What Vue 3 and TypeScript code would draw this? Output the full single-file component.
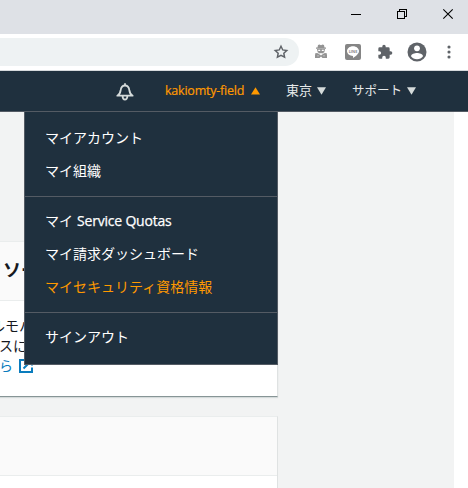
<script setup lang="ts">
interface MenuItem {
  prefix: string
  latin?: string
  active?: boolean
}

const menuGroups: MenuItem[][] = [
  [{ prefix: 'マイアカウント' }, { prefix: 'マイ組織' }],
  [
    { prefix: 'マイ', latin: 'Service Quotas' },
    { prefix: 'マイ請求ダッシュボード' },
    { prefix: 'マイセキュリティ資格情報', active: true },
  ],
  [{ prefix: 'サインアウト' }],
]
</script>

<template>
  <div class="window">
    <header class="titlebar">
      <svg class="win-btn" viewBox="0 0 46 28" shape-rendering="crispEdges">
        <path d="M18 14.5h10" stroke="#000" fill="none" />
      </svg>
      <svg class="win-btn" viewBox="0 0 46 28" shape-rendering="crispEdges">
        <path d="M18.5 11.5h7v7h-7zM20.5 11v-1.500h7v7h-1.500" stroke="#000" fill="none" />
      </svg>
      <svg class="win-btn" viewBox="0 0 46 28">
        <path d="M18.300 9.300l9.400 9.400M27.700 9.300l-9.400 9.400" stroke="#000" stroke-width="1.100" fill="none" />
      </svg>
    </header>

    <div class="toolbar">
      <div class="omnibox">
        <svg class="star" viewBox="0 0 16 16">
          <path d="M8 2.300l1.750 3.650 4.050.5-3 2.800.8 4L8 11.300l-3.600 1.950.8-4-3-2.800 4.050-.5z" fill="none" stroke="#5f6368" stroke-width="1.450" />
        </svg>
      </div>
      <svg class="ext incognito" viewBox="0 0 14 16">
        <g fill="#939393">
          <path d="M4 1l1.500-.5L7 1.200 8.500.5 10 1l.5 2.500h1.500v1.200H2V3.500h1.500z" />
          <path d="M3 5h8l-.7 3.300L7 10.300 3.700 8.300z" />
          <path d="M1.500 9l2.500.3L7 11.400l3-2.100 2.500-.3.500 2v3H8.500L7 12.400 5.500 14H1v-3z" />
        </g>
        <path d="M4.200 5.800h2v1.300h-2zM7.800 5.800h2v1.300h-2zM6 9h2v.7H6zM3.500 11.500h1v.8h-1zM9.500 11.500h1v.8h-1z" fill="#fff" />
      </svg>
      <svg class="ext line" viewBox="0 0 16 16">
        <rect width="16" height="16" rx="2" fill="#858585" />
        <path d="M8 2.200c3.400 0 6 2.200 6 4.900 0 2.500-3 5.200-6 7v-2.200c-3.400 0-6-2.200-6-4.800s2.600-4.900 6-4.900z" fill="#fff" />
        <text x="8" y="8.500" text-anchor="middle" font-size="3.800" font-weight="700" fill="#858585">LINE</text>
      </svg>
      <svg class="ext puzzle" viewBox="0 0 24 24">
        <path d="M20.500 11H19V7a2 2 0 0 0-2-2h-4V3.500a2.500 2.500 0 0 0-5 0V5H4a2 2 0 0 0-2 2v3.800h1.500a2.700 2.700 0 0 1 0 5.400H2V20a2 2 0 0 0 2 2h3.800v-1.500a2.700 2.700 0 0 1 5.400 0V22H17a2 2 0 0 0 2-2v-4h1.500a2.500 2.500 0 0 0 0-5z" fill="#5f6368" />
      </svg>
      <svg class="avatar" viewBox="0 0 20 20">
        <circle cx="10" cy="10" r="9.500" fill="#5f6368" />
        <circle cx="10" cy="6.300" r="2.900" fill="#fff" />
        <path d="M4 14.200c0-2.100 3.800-3.200 6-3.200s6 1.100 6 3.200c-1.300 1.900-3.500 3-6 3s-4.700-1.100-6-3z" fill="#fff" />
      </svg>
      <svg class="dots" viewBox="0 0 4 14">
        <g fill="#5f6368"><circle cx="2" cy="2" r="1.550" /><circle cx="2" cy="7" r="1.550" /><circle cx="2" cy="12" r="1.550" /></g>
      </svg>
    </div>

    <nav class="nav">
      <svg class="bell" viewBox="0 0 18 18">
        <g fill="none" stroke="#d5dbdb" stroke-width="1.800" stroke-linejoin="round" stroke-linecap="round">
          <path d="M1.300 12.700c2.600-1.200 2.900-2.700 3.300-5.200C5 4.400 6.500 2.500 9 2.500s4 1.900 4.400 5c.4 2.500.7 4 3.300 5.200zM9 1v1.300M6.600 13c0 4.700 4.800 4.700 4.800 0" />
        </g>
      </svg>
      <span class="account">kakiomty-field</span>
      <svg class="tri tri-up" viewBox="0 0 9 8"><path d="M4.500 0.300L9 7.500H0z" fill="#ff9900" /></svg>
      <span class="region">東京</span>
      <svg class="tri tri-region" viewBox="0 0 9 8"><path d="M4.500 7.700L9 0.300H0z" fill="#d5dbdb" /></svg>
      <span class="support">サポート</span>
      <svg class="tri tri-support" viewBox="0 0 9 8"><path d="M4.500 7.700L9 0.300H0z" fill="#d5dbdb" /></svg>
    </nav>

    <main class="page">
      <div class="content">
        <section class="card card-first">
          <div class="card-head"><h2>リソース</h2></div>
          <div class="card-body">
            <p class="copy copy-mobile">ルモバ</p>
            <p class="copy">スにア</p>
            <p class="copy link">
              <span>ら</span>
              <svg class="external" viewBox="0 0 14 14">
                <path d="M5 1H1v12h12V8.500M7.500 1H13v5.500M13 1L4.500 9.500" fill="none" stroke="#0a7cbd" stroke-width="2" />
              </svg>
            </p>
          </div>
        </section>
        <section class="card card-second">
          <div class="card-head"></div>
          <div class="card-body"></div>
        </section>
      </div>

      <div class="menu">
        <ul v-for="(group, index) in menuGroups" :key="index" class="group">
          <li v-for="item in group" :key="item.prefix" :class="{ active: item.active }">
            {{ item.prefix }}<span v-if="item.latin" class="latin">{{ item.latin }}</span>
          </li>
        </ul>
      </div>
    </main>
  </div>
</template>

<style>
body {
  margin: 0;
  background: #fff;
  overflow: hidden;
}
</style>

<style scoped>
* {
  box-sizing: border-box;
}
.window {
  width: 468px;
  height: 488px;
  overflow: hidden;
  display: flex;
  flex-direction: column;
  font-family: 'Open Sans', 'Noto Sans CJK JP', sans-serif;
}
svg {
  display: block;
  flex: none;
}
.titlebar {
  height: 34px;
  flex: none;
  display: flex;
  justify-content: flex-end;
  background: #dee1e6;
}
.win-btn {
  width: 46px;
  height: 28px;
}
.titlebar .win-btn:last-child {
  margin-right: -3px;
}
.toolbar {
  height: 37px;
  flex: none;
  display: flex;
  align-items: center;
  border-bottom: 1px solid #d5d9dc;
}
.omnibox {
  width: 299px;
  height: 28px;
  border-radius: 0 14px 14px 0;
  background: #eef2f3;
  display: flex;
  align-items: center;
  justify-content: flex-end;
  padding-right: 10px;
}
.star {
  width: 16px;
  height: 16px;
}
.ext {
  width: 16px;
  height: 16px;
}
.incognito {
  width: 14px;
  margin-left: 15px;
}
.line {
  margin-left: 17px;
}
.puzzle {
  margin-left: 16px;
}
.avatar {
  width: 20px;
  height: 20px;
  margin-left: 14px;
}
.dots {
  width: 4px;
  height: 14px;
  margin-left: 20px;
}
.nav {
  height: 41px;
  flex: none;
  display: flex;
  align-items: center;
  padding-left: 116px;
  background: #1f303e;
  border-bottom: 1px solid #545b64;
  color: #e6e9e9;
  font-size: 13px;
  white-space: nowrap;
}
.nav span {
  margin-top: -3px;
}
.bell {
  width: 18px;
  height: 18px;
  margin-top: 2px;
}
.nav .account {
  width: 80px;
  margin: -1px 0 0 31px;
  color: #ff9900;
  font-size: 12.500px;
  letter-spacing: -0.220px;
  -webkit-text-stroke: 0.200px #ff9900;
}
.tri {
  width: 9px;
  height: 8px;
}
.tri-up {
  margin-left: 6px;
}
.region {
  width: 26px;
  margin-left: 26px;
}
.tri-region {
  margin-left: 5px;
}
.support {
  width: 50px;
  margin-left: 26px;
  font-size: 12.500px;
}
.tri-support {
  margin-left: 5px;
}
.page {
  position: relative;
  flex: 1;
  width: 454px;
  padding-top: 129px;
  background: #f2f3f3;
}
.content {
  width: 278px;
  display: flex;
  flex-direction: column;
  gap: 19px;
}
.card {
  background: #fff;
  border-top: 1px solid #eaeded;
  border-right: 1px solid #dfe2e2;
}
.card-first {
  height: 156px;
  border-bottom: 1px solid #879596;
  box-shadow: 0 1px 1px #d5dbdb;
}
.card-second {
  height: 80px;
}
.card-head {
  height: 59px;
  background: #fafafa;
  border-bottom: 1px solid #eaeded;
  display: flex;
  align-items: center;
}
h2 {
  margin: -2px 0 0 -15px;
  font-size: 18px;
  line-height: 24px;
  font-weight: 700;
  color: #16191f;
}
.card-first .card-body {
  padding-top: 15px;
}
.copy {
  margin: 0 0 0 -1px;
  display: flex;
  align-items: center;
  height: 20px;
  font-size: 14px;
  line-height: 20px;
  color: #16191f;
  white-space: nowrap;
}
.copy-mobile {
  margin-left: -9px;
}
.link {
  color: #0a7cbd;
}
.external {
  width: 14px;
  height: 14px;
  margin-left: 6px;
}
.menu {
  position: absolute;
  left: 24px;
  top: 0;
  width: 254px;
  height: 253px;
  background: #1f303e;
  border: 1px solid #545b64;
  border-top: 0;
  color: #fff;
}
.group {
  list-style: none;
  margin: 0;
  padding: 7px 0 9px 20px;
  border-bottom: 1px solid #545b64;
}
.group:first-child {
  padding-top: 9px;
  padding-bottom: 9px;
}
.group:last-child {
  border-bottom: 0;
}
li {
  height: 33px;
  line-height: 33px;
  font-size: 14px;
  white-space: nowrap;
}
.active {
  color: #ff9900;
}
.latin {
  margin-left: 4px;
  letter-spacing: -0.200px;
  -webkit-text-stroke: 0.250px #fff;
}
</style>
